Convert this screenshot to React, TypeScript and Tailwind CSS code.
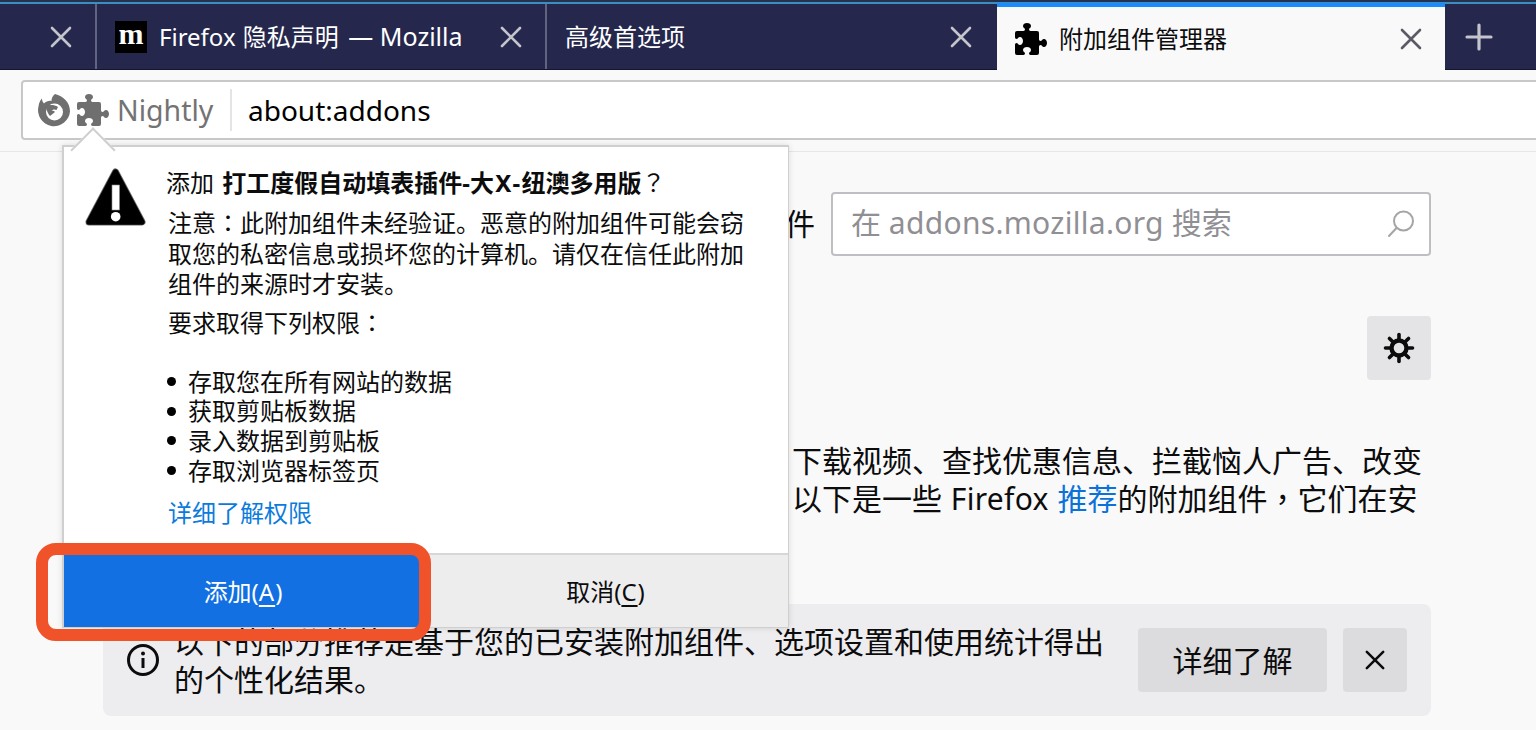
import React from "react";

const PUZZLE =
  "M14.5 8c-.971 0-1 1-1.75 1a.765.765 0 0 1-.75-.75V5a1 1 0 0 0-1-1H7.75A.765.765 0 0 1 7 3.25c0-.75 1-.779 1-1.75C8 .635 7.1 0 6 0S4 .635 4 1.5c0 .971 1 1 1 1.75a.765.765 0 0 1-.75.75H1a1 1 0 0 0-1 1v2.25A.765.765 0 0 0 .75 8c.75 0 .779-1 1.75-1C3.365 7 4 7.9 4 9s-.635 2-1.5 2c-.971 0-1-1-1.75-1a.765.765 0 0 0-.75.75V15a1 1 0 0 0 1 1h3.25a.765.765 0 0 0 .75-.75c0-.75-1-.779-1-1.75 0-.865.9-1.5 2-1.5s2 .635 2 1.5c0 .971-1 1-1 1.75a.765.765 0 0 0 .75.75H11a1 1 0 0 0 1-1v-3.25a.765.765 0 0 1 .75-.75c.75 0 .779 1 1.75 1 .865 0 1.5-.9 1.5-2s-.635-2-1.5-2z";

function Puzzle({ className }: { className: string }) {
  return (
    <svg viewBox="0 0 16 16" className={className} fill="currentColor">
      <path d={PUZZLE} />
    </svg>
  );
}

function Cross({ className, size = 22, width = 2.6 }: { className: string; size?: number; width?: number }) {
  return (
    <svg viewBox="0 0 22 22" width={size} height={size} className={className} fill="none" stroke="currentColor" strokeWidth={width} strokeLinecap="round">
      <path d="M2 2 20 20M20 2 2 20" />
    </svg>
  );
}

function FirefoxGlyph() {
  return (
    <svg viewBox="0 0 33 33" className="w-[33px] h-[33px] shrink-0">
      <path
        fill="#6f6f6f"
        d="M18 0C26 2 33 8 33 17.5A16 16 0 1 1 1.6 12C2 9 3 6.5 5 4.5C5 6.5 5.6 8 7 9.5C9 7.5 12 6.5 14.5 7C14.5 4 15.5 2 18 0Z"
      />
      <circle cx="17.5" cy="18" r="8.5" fill="#fff" />
      <path fill="#6f6f6f" d="M8.5 12.5C12 10.5 17 10.5 21 13L19.5 16C17.5 15 15.5 15.3 14.5 17C16 16.6 17.2 17 18 18L13 22C11 20 9.5 16 8.5 12.5Z" />
    </svg>
  );
}

function Gear() {
  const teeth = [0, 45, 90, 135, 180, 225, 270, 315];
  return (
    <svg viewBox="0 0 32 32" className="w-8 h-8 text-[#0c0c0d]" fill="none" stroke="currentColor">
      <circle cx="16" cy="16" r="7.5" strokeWidth="4.4" />
      {teeth.map((a) => (
        <path key={a} d="M16 2.5V8" strokeWidth="3.6" strokeLinecap="round" transform={`rotate(${a} 16 16)`} />
      ))}
    </svg>
  );
}

function WarningIcon() {
  return (
    <svg viewBox="0 0 62 62" className="w-[62px] h-[62px] shrink-0">
      <path d="M30.5 5 57 55H4Z" fill="#6b6b6b" stroke="#6b6b6b" strokeWidth="7" strokeLinejoin="round" />
      <path d="M30.5 5 57 55H4Z" fill="#000" stroke="#000" strokeWidth="5.4" strokeLinejoin="round" />
      <rect x="27" y="18" width="7.5" height="25" fill="#fff" stroke="#8a8a8a" strokeWidth="0.6" />
      <circle cx="30.7" cy="49.7" r="4.8" fill="#fff" />
    </svg>
  );
}

function P({ c }: { c: string }) {
  return <span className="leading-[0] font-['Noto_Sans_CJK_TC',sans-serif]">{c}</span>;
}

const UI = "font-['Noto_Sans','Noto_Sans_CJK_SC',sans-serif]";

export default function App() {
  return (
    <div className={`relative w-[1536px] h-[730px] overflow-hidden flex flex-col bg-[#f9f9fa] text-[#0c0c0d] ${UI}`}>
      {/* tab strip */}
      <div className="h-[70px] shrink-0 flex flex-col bg-[#25274d]">
        <div className="h-[2px] bg-[#25324f]" />
        <div className="h-[2px] bg-[#3b8fc0]" />
        <div className="flex-1 flex text-[24px] text-white border-b border-[#14152e]">
          <div className="w-[97px] flex items-center justify-end pr-[23px] border-r-2 border-[#62647f]">
            <Cross className="text-[#c4c4cc]" />
          </div>
          <div className="w-[450px] flex items-center pl-[18px] pr-[23px] border-r-2 border-[#62647f]">
            <span className="w-8 h-8 bg-black flex items-center justify-center text-white text-[30px] font-black leading-none font-['Liberation_Serif',serif] pb-[6px]">m</span>
            <span className="ml-[12px] whitespace-nowrap">
              Firefox <span className="ml-px">隐私声明</span>
              <span className="ml-[3px] text-[25px] leading-[0]"> — Mozilla</span>
            </span>
            <Cross className="ml-auto text-[#c4c4cc]" />
          </div>
          <div className="w-[450px] flex items-center pl-[18px] pr-[25px]">
            <span className="whitespace-nowrap">高级首选项</span>
            <Cross className="ml-auto text-[#c4c4cc]" />
          </div>
          <div className="w-[448px] -mt-px mb-[-1px] flex items-center pl-[18px] pr-[23px] bg-[#f9f9fa] text-[#0c0c0d] border-t-4 border-[#1a8cff]">
            <Puzzle className="w-8 h-8 text-black" />
            <span className="ml-[12px] whitespace-nowrap">附加组件管理器</span>
            <Cross className="ml-auto text-[#5b5b66]" />
          </div>
          <div className="flex-1 flex items-center pl-[20px]">
            <svg viewBox="0 0 28 28" className="w-7 h-7 text-[#c4c4cc]" fill="none" stroke="currentColor" strokeWidth="3.2" strokeLinecap="round">
              <path d="M14 2V26M2 14H26" />
            </svg>
          </div>
        </div>
      </div>

      {/* toolbar */}
      <div className="h-[82px] shrink-0 pt-[10px] pl-[21px] border-b border-[#e6e6e8]">
        <div className="h-[60px] -mr-2 bg-white border-2 border-[#c8c8c8] rounded-[4px] flex items-center pl-[14px]">
          <FirefoxGlyph />
          <Puzzle className="ml-[7px] w-8 h-8 text-[#6f6f6f]" />
          <span className="ml-[8px] w-[97px] text-[28.5px] text-[#737373] leading-none">Nightly</span>
          <span className="ml-[16px] w-[2px] h-[42px] bg-[#e4e4e6]" />
          <span className="ml-[16px] text-[28px] text-black leading-none">about:addons</span>
        </div>
      </div>

      {/* page */}
      <main className="flex-1 flex flex-col pl-[103px] pr-[105px]">
        <div className="mt-[40px] flex items-center justify-end">
          <span className="text-[30px] leading-none">件</span>
          <div className="ml-[16px] w-[600px] h-16 bg-white border-2 border-[#bfbfc3] rounded-[4px] flex items-center pl-[18px] pr-[14px]">
            <span className="text-[30px] leading-[40px] mb-[2px] text-[#8f8f94] whitespace-nowrap">
              在 <span className="tracking-[0.3px]">addons.mozilla.org</span> 搜索
            </span>
            <svg viewBox="0 0 28 28" className="ml-auto w-7 h-7 text-[#a5a5a8]" fill="none" stroke="currentColor" strokeWidth="2">
              <circle cx="16.5" cy="11" r="9.5" />
              <path d="M9.5 18 2 26" strokeLinecap="round" />
            </svg>
          </div>
        </div>

        <div className="mt-[60px] self-end w-16 h-16 rounded-[4px] bg-[#e4e4e6] flex items-center justify-center">
          <Gear />
        </div>

        <div className="mt-[62px] pl-[689px] text-[30px] leading-[38px] whitespace-nowrap">
          <p>下载视频、查找优惠信息、拦截恼人广告、改变</p>
          <p>
            以下是一些 <span className="mx-px tracking-[0.3px]">Firefox</span> <span className="text-[#0a72d8]">推荐</span>的附加组件<P c="，" />它们在安
          </p>
        </div>

        <div className="mt-[86px] h-[112px] rounded-[8px] bg-[#ededf0] flex items-center pl-6 pr-6">
          <svg viewBox="0 0 32 32" className="w-8 h-8 shrink-0 text-[#0c0c0d]" fill="none" stroke="currentColor">
            <circle cx="16" cy="16" r="14.5" strokeWidth="3" />
            <rect x="14.5" y="14" width="3" height="10" fill="currentColor" stroke="none" />
            <circle cx="16" cy="9.5" r="2" fill="currentColor" stroke="none" />
          </svg>
          <p className="ml-[15px] mt-[2px] w-[931px] text-[30px] leading-[38px]">以下的部分推荐是基于您的已安装附加组件、选项设置和使用统计得出的个性化结果。</p>
          <button className="ml-auto w-[189px] h-16 rounded-[4px] bg-[#dcdcde] text-[30px]">详细了解</button>
          <button className="ml-4 w-16 h-16 rounded-[4px] bg-[#dcdcde] flex items-center justify-center">
            <Cross className="text-[#0c0c0d]" size={20} width={2.8} />
          </button>
        </div>
      </main>

      {/* add-on install doorhanger */}
      <div className="absolute left-[62px] top-[145px] w-[727px] h-[483px] bg-white border-2 border-r-[1px] border-b-[1px] border-[#cfcfcf] flex flex-col text-[24px] text-[#0c0c0d] shadow-[0_0_6px_rgba(0,0,0,0.12)]">
        <div className="absolute left-[13px] -top-[13px] w-[32px] h-[32px] rotate-45 bg-white border-l-2 border-t-2 border-[#cfcfcf]" />
        <div className="relative flex-1 flex pl-[21px] pt-[20px]">
          <WarningIcon />
          <div className="ml-[19px] -mt-[2px]">
            <p className="leading-[36px] whitespace-nowrap">
              添加 <b className="ml-[2px] font-bold">打工度假自动填表插件-<span className="tracking-[1.3px]">大X-</span>纽澳多用版</b>
              <P c="？" />
            </p>
            <p className="ml-[2px] mt-[7px] w-[578px] leading-[30.5px]">注意<P c="：" />此附加组件未经验证。恶意的附加组件可能会窃取您的私密信息或损坏您的计算机。请仅在信任此附加组件的来源时才安装。</p>
            <p className="ml-[2px] mt-[8px] leading-[30px]">要求取得下列权限<P c="：" /></p>
            <ul className="ml-px mt-[29px] leading-[29.7px]">
              {["存取您在所有网站的数据", "获取剪贴板数据", "录入数据到剪贴板", "存取浏览器标签页"].map((t) => (
                <li key={t} className="flex items-center">
                  <span className="w-[9px] h-[9px] rounded-full bg-black" />
                  <span className="ml-[12px]">{t}</span>
                </li>
              ))}
            </ul>
            <a className="block ml-[2px] mt-[13px] leading-[30px] text-[#0c7bdc]">详细了解权限</a>
          </div>
        </div>
        <div className="relative h-[74px] shrink-0 flex border-t-2 border-[#d7d7d9]">
          <button className="w-[356px] pt-[2px] pl-[2px] bg-[#1270e3] text-white">
            添加(<span className="underline underline-offset-4 tracking-[1px]">A</span>)
          </button>
          <button className="flex-1 pt-[2px] pl-[3px] bg-[#ededed]">
            取消(<span className="underline underline-offset-4 tracking-[1px]">C</span>)
          </button>
        </div>
      </div>

      {/* annotation highlight */}
      <div className="absolute left-[36px] top-[543px] w-[395px] h-[98px] rounded-[20px] border-[12px] border-[#f0532a]" />
    </div>
  );
}
